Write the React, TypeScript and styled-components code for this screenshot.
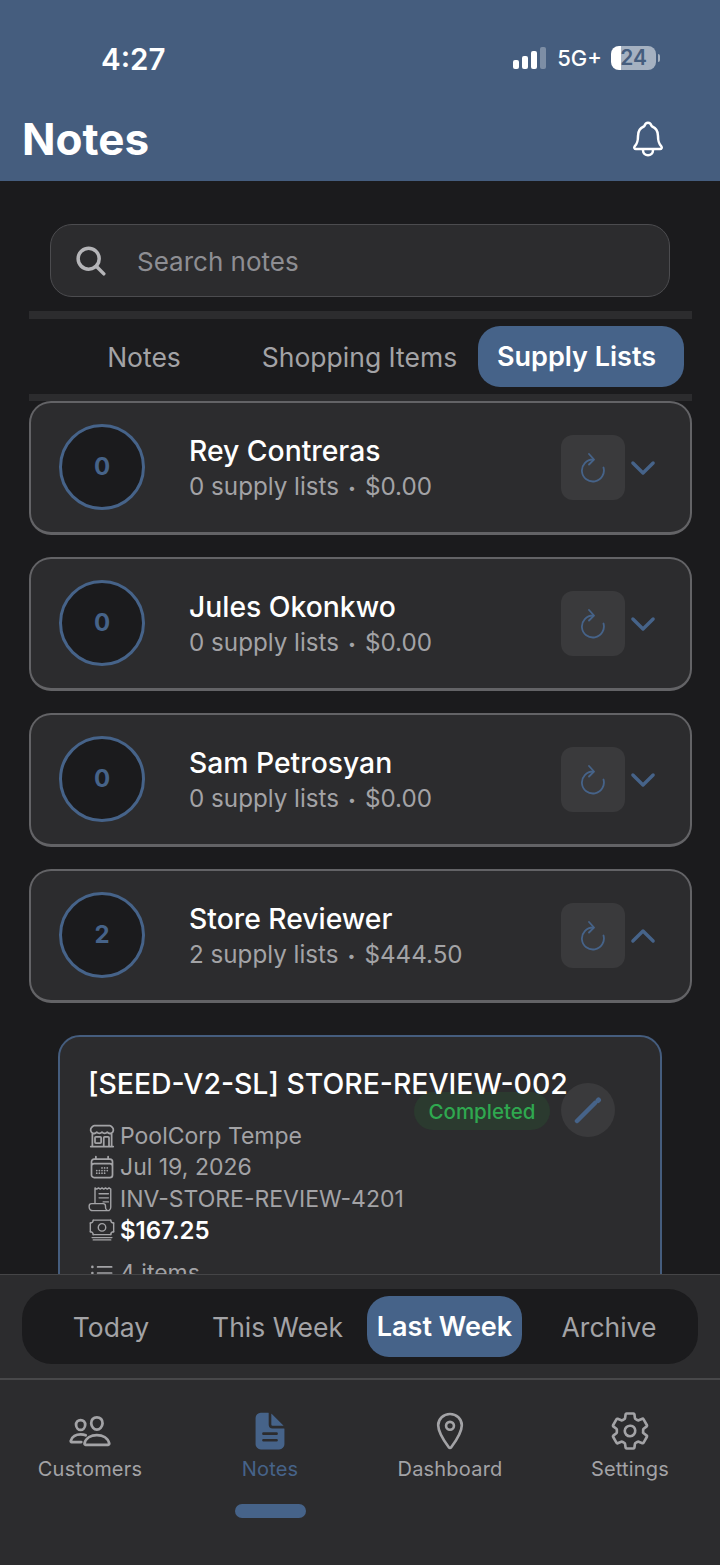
import styled, { createGlobalStyle } from 'styled-components';
import {
  IoChevronDown,
  IoChevronUp,
  IoDocumentText,
  IoLocationOutline,
  IoNotificationsOutline,
  IoPeopleOutline,
  IoSearch,
  IoSettingsOutline,
} from 'react-icons/io5';
import {
  HiOutlineBuildingStorefront,
  HiOutlineCalendarDays,
  HiOutlineListBullet,
} from 'react-icons/hi2';

const HEADER = '#455d7e';
const BLUE = '#466389';
const DARK = '#1b1b1d';
const PANEL = '#2c2c2e';
const MUTED = '#a3a3a6';

const Global = createGlobalStyle`
  html, body { margin: 0; padding: 0; background: ${DARK}; }
  * { box-sizing: border-box; }
  body { font-family: Inter, "Liberation Sans", sans-serif; }
`;

const Page = styled.div`
  width: 720px;
  height: 1565px;
  display: flex;
  flex-direction: column;
  overflow: hidden;
  background: ${DARK};
`;

const Header = styled.header`
  height: 181px;
  flex: none;
  background: ${HEADER};
  color: #fff;
  padding: 43px 52px 0 22px;
`;

const StatusRow = styled.div`
  height: 30px;
  display: flex;
  align-items: center;
  justify-content: space-between;
  padding-left: 79px;
`;

const Time = styled.span`
  font-size: 29.5px;
  font-weight: 600;
  margin-top: 2px;
`;

const StatusIcons = styled.div`
  display: flex;
  align-items: center;
  margin-right: 12px;
`;

const Signal = styled.div`
  display: flex;
  align-items: flex-end;
  gap: 3px;
  height: 22px;
  margin-right: 11px;
`;

const Bar = styled.i<{ $h: number; $off?: boolean }>`
  width: 6px;
  height: ${(p) => p.$h}px;
  border-radius: 2px;
  background: ${(p) => (p.$off ? 'rgba(255,255,255,.3)' : '#fff')};
`;

const Network = styled.span`
  font-size: 22px;
  font-weight: 500;
  margin-right: 9px;
`;

const Battery = styled.div`
  position: relative;
  width: 45px;
  height: 24px;
  border-radius: 8px;
  background: linear-gradient(90deg, #fff 0 10px, #a5b1c1 10px);
  color: ${HEADER};
  font-size: 21px;
  font-weight: 600;
  line-height: 24px;
  text-align: center;

  &::after {
    content: '';
    position: absolute;
    right: -4px;
    top: 8px;
    width: 2px;
    height: 8px;
    border-radius: 0 2px 2px 0;
    background: #a5b1c1;
  }
`;

const TitleRow = styled.div`
  display: flex;
  align-items: center;
  justify-content: space-between;
  margin-top: 41px;
  height: 50px;
`;

const Title = styled.h1`
  margin: 0;
  font-size: 44px;
  font-weight: 700;
`;

const Main = styled.main`
  flex: 1;
  min-height: 0;
  overflow: hidden;
  padding: 43px 28px 0 29px;
`;

const Search = styled.div`
  height: 73px;
  margin: 0 22px 14px 21px;
  display: flex;
  align-items: center;
  gap: 28px;
  padding-left: 22px;
  padding-top: 1px;
  background: ${PANEL};
  border: 1px solid #4c4c4f;
  border-radius: 22px;
  color: #8e8e93;
  font-size: 26px;

  svg { color: #b5b5b8; }
`;

const Tabs = styled.div`
  height: 90px;
  display: flex;
  align-items: center;
  border-top: 8px solid ${PANEL};
  border-bottom: 7px solid ${PANEL};
`;

const Tab = styled.div<{ $active?: boolean; $w: number; $pad?: number }>`
  width: ${(p) => p.$w}px;
  height: 61px;
  flex: none;
  display: flex;
  align-items: center;
  justify-content: center;
  padding-right: ${(p) => p.$pad ?? 0}px;
  border-radius: 22px;
  font-size: ${(p) => (p.$active ? 27 : 26.5)}px;
  font-weight: ${(p) => (p.$active ? 600 : 400)};
  color: ${(p) => (p.$active ? '#fff' : MUTED)};
  background: ${(p) => (p.$active ? BLUE : 'transparent')};
  white-space: nowrap;
`;

const Card = styled.section`
  height: 134px;
  margin-bottom: 22px;
  display: flex;
  align-items: center;
  padding: 0 30px 0 28px;
  background: ${PANEL};
  border: 2px solid #636366;
  border-bottom-width: 3px;
  border-radius: 22px;
`;

const Count = styled.div`
  width: 86px;
  height: 86px;
  flex: none;
  margin-bottom: 2px;
  display: flex;
  align-items: center;
  justify-content: center;
  background: ${DARK};
  border: 3px solid ${BLUE};
  border-radius: 50%;
  color: ${BLUE};
  font-size: 24px;
  font-weight: 700;
`;

const Info = styled.div`
  flex: 1;
  margin-left: 44px;
  padding-top: 4px;
`;

const Name = styled.div`
  color: #fff;
  font-size: 28.3px;
  font-weight: 500;
  line-height: 34px;
`;

const Sub = styled.div`
  margin-top: 2px;
  color: ${MUTED};
  font-size: 24.2px;
  line-height: 34px;
`;

const Dot = styled.span`
  margin: 0 9px;
  font-size: 14px;
  vertical-align: 2px;
`;

const RefreshButton = styled.div`
  width: 64px;
  height: 65px;
  display: flex;
  align-items: center;
  justify-content: center;
  background: #3a3a3c;
  border-radius: 12px;
  color: ${BLUE};
`;

const Chevron = styled.div`
  width: 36px;
  display: flex;
  justify-content: center;
  margin-right: -1px;
  color: ${BLUE};
`;

const Receipt = styled.article`
  position: relative;
  margin: 32px 30px 0 29px;
  height: 300px;
  padding: 30px 28px 0;
  background: ${PANEL};
  border: 2px solid ${HEADER};
  border-radius: 22px;
`;

const ReceiptTitle = styled.h2`
  position: relative;
  z-index: 1;
  margin: 0 0 19px;
  color: #fff;
  font-size: 28.4px;
  font-weight: 500;
  line-height: 34px;
  white-space: nowrap;
`;

const Meta = styled.div<{ $strong?: boolean; $gap?: number }>`
  height: 31.5px;
  margin-top: ${(p) => p.$gap ?? 0}px;
  display: flex;
  align-items: center;
  gap: 4px;
  font-size: ${(p) => (p.$strong ? 24 : 23)}px;
  font-weight: ${(p) => (p.$strong ? 600 : 400)};
  color: ${(p) => (p.$strong ? '#fff' : MUTED)};

  svg { color: ${MUTED}; flex: none; }
`;

const Status = styled.span`
  position: absolute;
  left: 354px;
  top: 55px;
  width: 136px;
  height: 38px;
  display: flex;
  align-items: center;
  justify-content: center;
  border-radius: 19px;
  background: #2b3a2f;
  color: #2fa84f;
  font-size: 20.5px;
  font-weight: 500;
`;

const EditButton = styled.div`
  position: absolute;
  left: 501px;
  top: 46px;
  width: 54px;
  height: 54px;
  display: flex;
  align-items: center;
  justify-content: center;
  border-radius: 50%;
  background: #3a3a3c;
  color: ${BLUE};
`;

const Footer = styled.footer`
  flex: none;
  height: 291px;
  background: ${PANEL};
  border-top: 1px solid #454547;
`;

const RangeBar = styled.div`
  height: 105px;
  padding: 14px 22px 15px;
  border-bottom: 2px solid #48484a;
`;

const RangeTrack = styled.div`
  height: 75px;
  display: flex;
  align-items: center;
  padding: 0 7px;
  background: ${DARK};
  border-radius: 30px;
`;

const Range = styled(Tab)``;

const Nav = styled.nav`
  display: grid;
  grid-template-columns: repeat(4, 180px);
  padding-top: 30px;
`;

const NavItem = styled.div<{ $active?: boolean }>`
  display: flex;
  flex-direction: column;
  align-items: center;
  gap: 5px;
  font-size: 20px;
  letter-spacing: 0.2px;
  color: ${(p) => (p.$active ? BLUE : MUTED)};
`;

const NavIcon = styled.div`
  height: 42px;
  display: flex;
  align-items: center;
  justify-content: center;
`;

const Indicator = styled.div`
  width: 71px;
  height: 14px;
  margin: 23px 0 0 235px;
  border-radius: 7px;
  background: ${BLUE};
`;

function RefreshIcon() {
  return (
    <svg width="26" height="30" viewBox="0 0 26 30" fill="none" stroke="currentColor" strokeWidth="1.8" strokeLinecap="round" strokeLinejoin="round">
      <path d="M13 6.500a11 11 0 1 0 10.500 8" />
      <path d="M9 1l5 5.500L9 11.500" />
    </svg>
  );
}

function PencilIcon() {
  return (
    <svg width="28" height="28" viewBox="0 0 28 28" fill="none" stroke="currentColor" strokeLinecap="round">
      <path d="M3 25L21 7" strokeWidth="4.500" />
      <path d="M24 4.500l.5-.5" strokeWidth="5" />
    </svg>
  );
}

function ScrollIcon() {
  return (
    <svg width="28" height="28" viewBox="0 0 24 24" fill="none" stroke="currentColor" strokeWidth="1.2" strokeLinecap="round" strokeLinejoin="round">
      <path d="M6 16V2.500l1.500 1 1.500-1 1.500 1 1.500-1 1.500 1 1.500-1 1.500 1 1.500-1 1.500 1V19a3 3 0 0 1-3 3H4a3 3 0 0 1-3-3v-1a2 2 0 0 1 2-2h10a2 2 0 0 1 2 2v1a3 3 0 0 0 3 3" />
      <path d="M9.500 7.500h8M9.500 11h8M13 14.500h4.500" />
    </svg>
  );
}

function CashIcon() {
  return (
    <svg width="28" height="28" viewBox="0 0 24 24" fill="none" stroke="currentColor" strokeWidth="1.2" strokeLinecap="round" strokeLinejoin="round">
      <path d="M4.500 3.500h15M4.500 16h15M2 6v7.500M22 6v7.500" />
      <path d="M2 6a2.500 2.500 0 0 0 2.500-2.500M22 6a2.500 2.500 0 0 1-2.500-2.500M2 13.500A2.500 2.500 0 0 1 4.500 16M22 13.500a2.500 2.500 0 0 0-2.500 2.500" />
      <circle cx="12" cy="9.750" r="3.200" />
      <path d="M3.500 18.500h17M4.500 20.500h15" />
    </svg>
  );
}

const people = [
  { name: 'Rey Contreras', lists: '0 supply lists', total: '$0.00', count: 0 },
  { name: 'Jules Okonkwo', lists: '0 supply lists', total: '$0.00', count: 0 },
  { name: 'Sam Petrosyan', lists: '0 supply lists', total: '$0.00', count: 0 },
  { name: 'Store Reviewer', lists: '2 supply lists', total: '$444.50', count: 2, open: true },
];

export default function App() {
  return (
    <Page>
      <Global />
      <Header>
        <StatusRow>
          <Time>4:27</Time>
          <StatusIcons>
            <Signal>
              <Bar $h={9} />
              <Bar $h={13} />
              <Bar $h={18} />
              <Bar $h={22} $off />
            </Signal>
            <Network>5G+</Network>
            <Battery>24</Battery>
          </StatusIcons>
        </StatusRow>
        <TitleRow>
          <Title>Notes</Title>
          <IoNotificationsOutline size={40} />
        </TitleRow>
      </Header>

      <Main>
        <Search>
          <IoSearch size={36} />
          Search notes
        </Search>
        <Tabs>
          <Tab $w={230}>Notes</Tab>
          <Tab $w={219} $pad={18}>Shopping Items</Tab>
          <Tab $w={206} $pad={9} $active>Supply Lists</Tab>
        </Tabs>
        {people.map((p) => (
          <Card key={p.name}>
            <Count>{p.count}</Count>
            <Info>
              <Name>{p.name}</Name>
              <Sub>{p.lists}<Dot>•</Dot>{p.total}</Sub>
            </Info>
            <RefreshButton>
              <RefreshIcon />
            </RefreshButton>
            <Chevron>{p.open ? <IoChevronUp size={36} /> : <IoChevronDown size={36} />}</Chevron>
          </Card>
        ))}
        <Receipt>
          <ReceiptTitle>[SEED-V2-SL] STORE-REVIEW-002</ReceiptTitle>
          <Status>Completed</Status>
          <EditButton>
            <PencilIcon />
          </EditButton>
          <Meta><HiOutlineBuildingStorefront size={28} />PoolCorp Tempe</Meta>
          <Meta><HiOutlineCalendarDays size={28} />Jul 19, 2026</Meta>
          <Meta><ScrollIcon />INV-STORE-REVIEW-4201</Meta>
          <Meta $strong><CashIcon />$167.25</Meta>
          <Meta $gap={11}><HiOutlineListBullet size={28} />4 items</Meta>
        </Receipt>
      </Main>

      <Footer>
        <RangeBar>
          <RangeTrack>
            <Range $w={164}>Today</Range>
            <Range $w={174} $pad={5}>This Week</Range>
            <Range $w={155} $active>Last Week</Range>
            <Range $w={174}>Archive</Range>
          </RangeTrack>
        </RangeBar>
        <Nav>
          <NavItem><NavIcon><IoPeopleOutline size={44} /></NavIcon>Customers</NavItem>
          <NavItem $active><NavIcon><IoDocumentText size={42} /></NavIcon>Notes</NavItem>
          <NavItem><NavIcon><IoLocationOutline size={42} /></NavIcon>Dashboard</NavItem>
          <NavItem><NavIcon><IoSettingsOutline size={42} /></NavIcon>Settings</NavItem>
        </Nav>
        <Indicator />
      </Footer>
    </Page>
  );
}
